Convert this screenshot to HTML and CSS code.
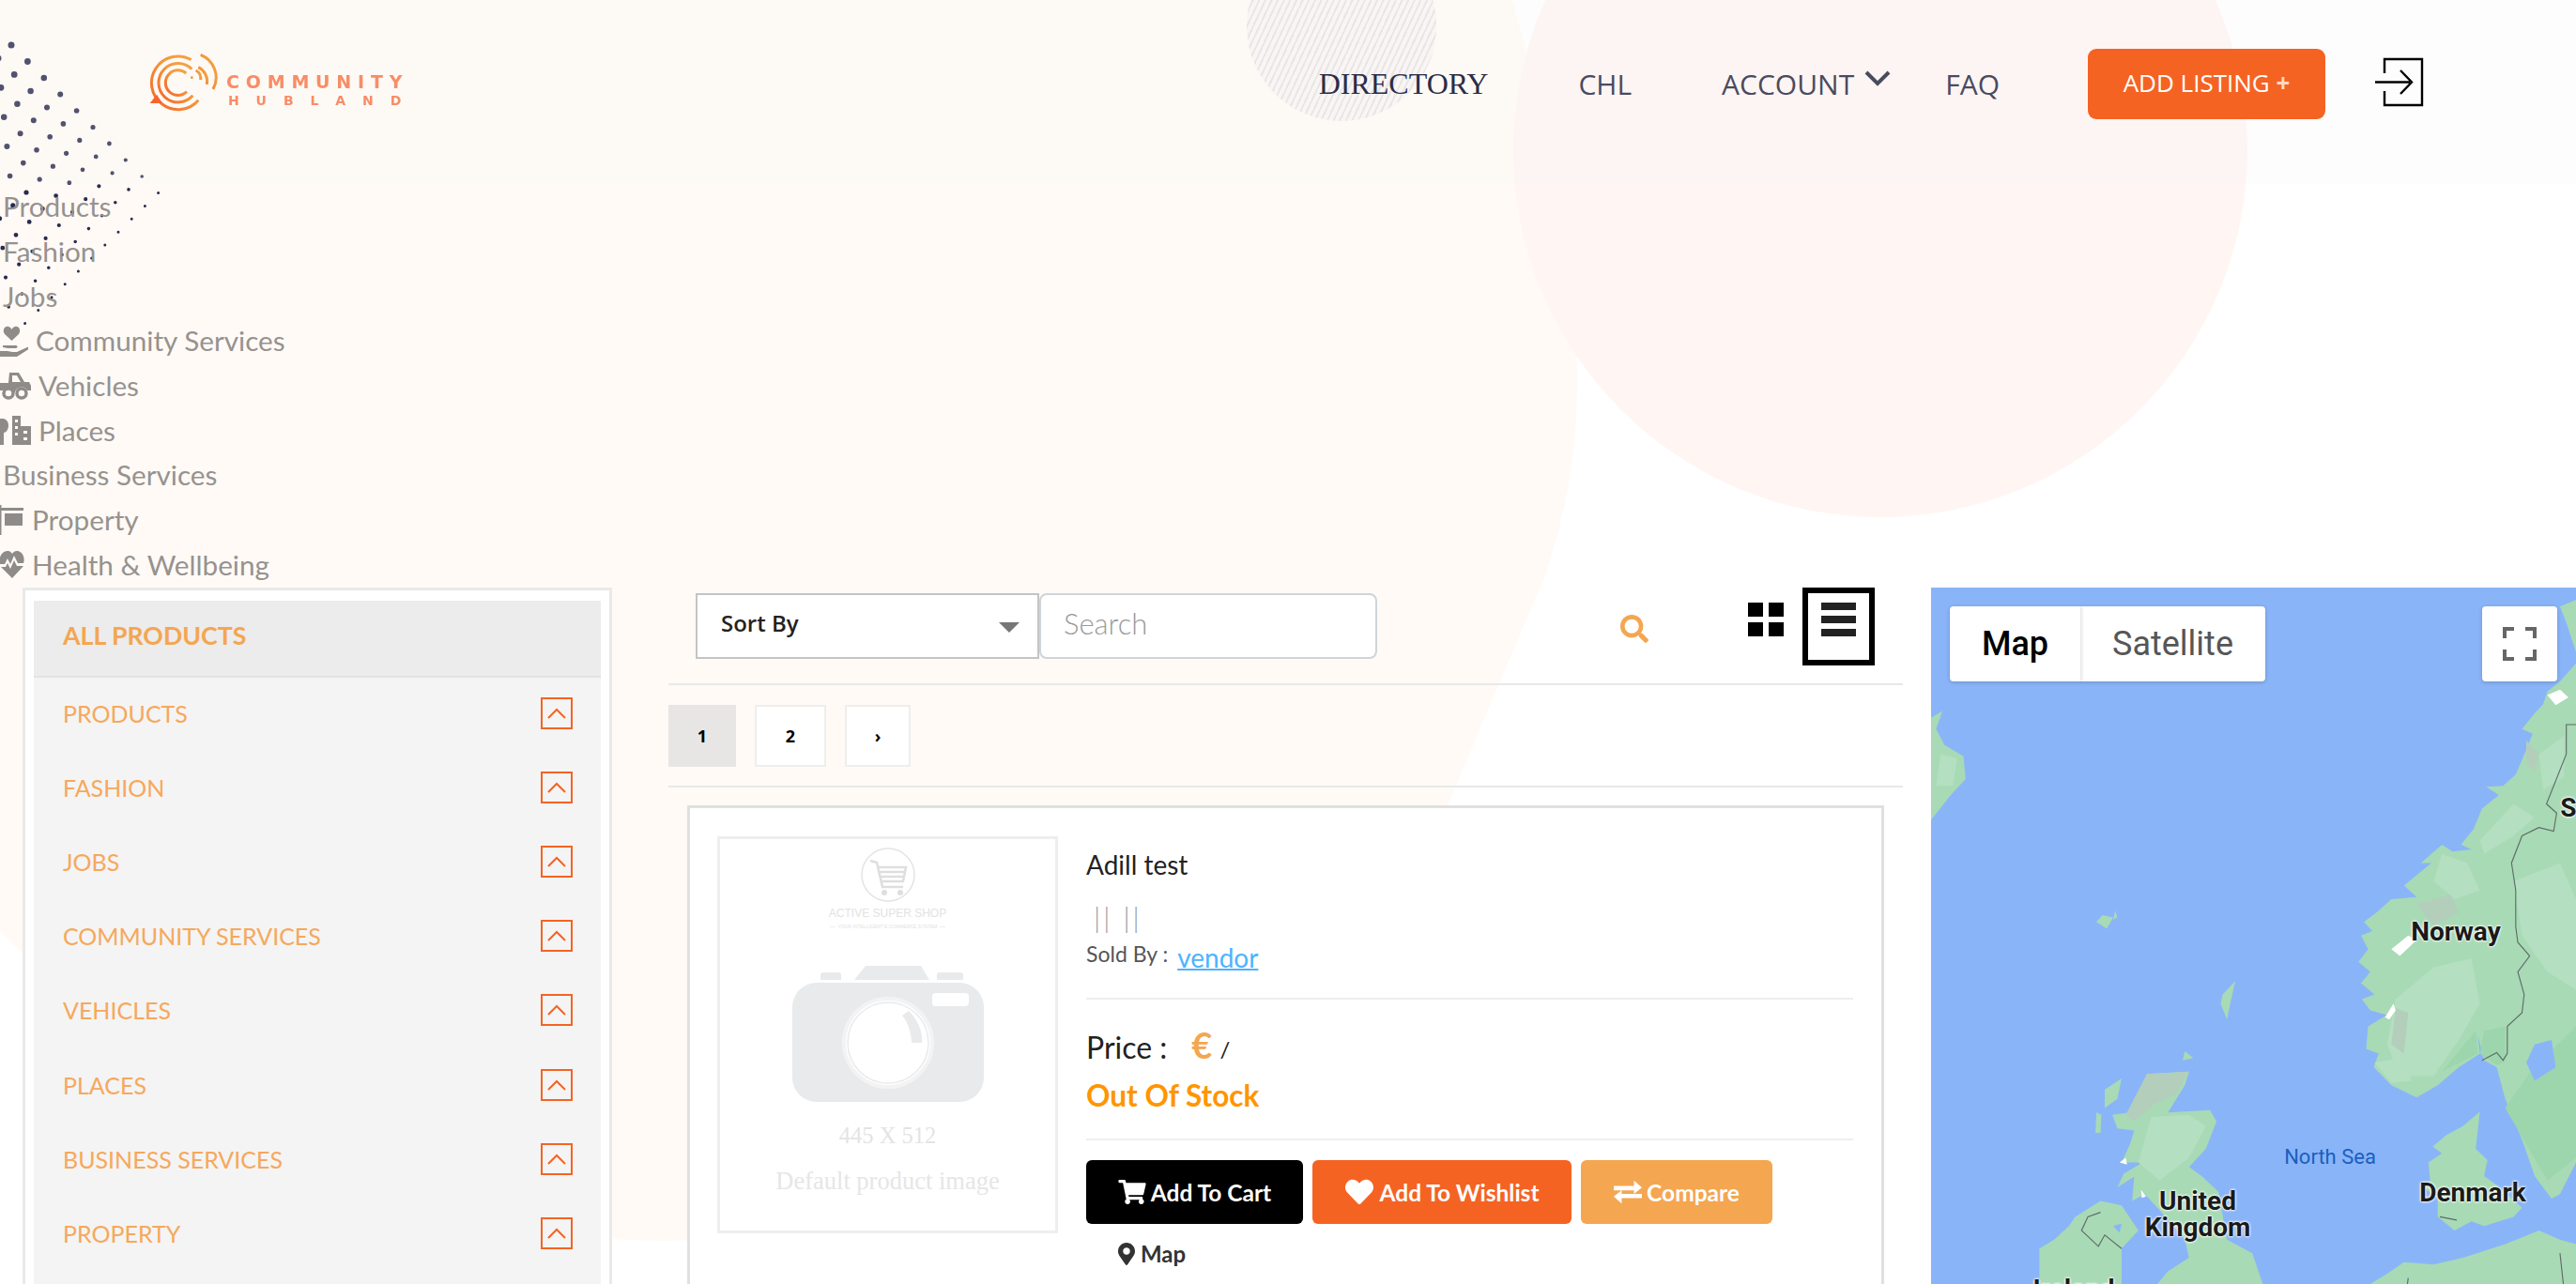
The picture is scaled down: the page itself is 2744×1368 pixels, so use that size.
FILE: index.html
```html
<!DOCTYPE html>
<html lang="en">
<head>
<meta charset="utf-8">
<title>Community Hubland - Directory</title>
<link rel="stylesheet" href="styles.css">
</head>
<body>
<div class="backdrop" aria-hidden="true">
  <svg class="blob" viewBox="0 0 2744 1368">
    <path class="blob-cream" d="M0 0H1611C1690 300 1700 450 1647 610L1542 858C1400 1200 1000 1322 700 1322C400 1320 150 1140 0 992Z"/>
    <circle class="blob-pink" cx="2003" cy="160" r="391"/>
  </svg>
  <div class="hatch"></div>
  <svg class="dots" viewBox="0 0 180 360">
    <g fill="none" stroke="#2a2a4e" stroke-linecap="round">
      <path stroke-width="7" d="M12 48h0M-2 62h0"/>
      <path stroke-width="6.8" d="M29.400 65.500h0M15.200 79.400h0M1 93.300h0"/>
      <path stroke-width="6.500" d="M46.800 83h0M32.600 96.900h0M18.400 110.800h0M4.200 124.700h0"/>
      <path stroke-width="6" d="M64.200 100.500h0M50 114.400h0M35.800 128.300h0M21.600 142.200h0M7.400 156.100h0"/>
      <path stroke-width="5.600" d="M81.600 118h0M67.400 131.900h0M53.200 145.800h0M39 159.700h0M24.800 173.600h0M10.600 187.500h0"/>
      <path stroke-width="5.200" d="M99 135.500h0M84.800 149.400h0M70.600 163.300h0M56.400 177.200h0M42.200 191.100h0M28 205h0M13.800 218.900h0M-.4 232.800h0"/>
      <path stroke-width="4.800" d="M116.400 153h0M102.200 166.900h0M88 180.800h0M73.800 194.700h0M59.600 208.600h0M45.400 222.500h0M31.200 236.400h0M17 250.300h0M2.800 264.200h0"/>
      <path stroke-width="4.200" d="M133.800 170.500h0M119.600 184.400h0M105.400 198.300h0M91.200 212.200h0M77 226.100h0M62.800 240h0M48.600 253.900h0M34.400 267.800h0M20.200 281.700h0M6 295.600h0"/>
      <path stroke-width="3.600" d="M151.200 188h0M137 201.900h0M122.800 215.800h0M108.600 229.700h0M94.400 243.600h0M80.200 257.500h0M66 271.400h0M51.800 285.300h0M37.600 299.200h0M23.400 313.100h0M9.200 327h0"/>
      <path stroke-width="3" d="M168.600 205.500h0M154.400 219.400h0M140.200 233.300h0M126 247.200h0M111.800 261.100h0M97.600 275h0M83.400 288.900h0M69.200 302.800h0M55 316.700h0M40.800 330.600h0M26.600 344.500h0"/>
    </g>
  </svg>
</div>

<header class="topbar">
  <a class="logo" href="#">
    <svg class="logo-mark" viewBox="80 75 225 195" aria-hidden="true">
      <defs>
        <linearGradient id="logoGrad" x1="0" y1="1" x2="1" y2="0">
          <stop offset="0" stop-color="#f5642a"/>
          <stop offset=".6" stop-color="#f49a3c"/>
          <stop offset="1" stop-color="#f2a545"/>
        </linearGradient>
      </defs>
      <g fill="none" stroke="url(#logoGrad)" stroke-width="9" stroke-linecap="butt">
        <path d="M220 101A85 85 0 1 0 243 230"/>
        <path d="M222 131A62 62 0 1 0 225 215"/>
        <path d="M204 144A40 40 0 1 0 206 203"/>
        <path d="M250 85A78 78 0 0 1 290 195"/>
        <path d="M243 125A50 50 0 0 1 270 180"/>
        <path d="M235 135A28 28 0 0 1 250 165"/>
      </g>
      <circle cx="222" cy="158" r="4" fill="#f4933a"/>
      <path d="M88 240L110 212L128 240Z" fill="#f5642a"/>
    </svg>
    <span class="logo-text">
      <span class="logo-top">COMMUNITY</span>
      <span class="logo-bottom">HUBLAND</span>
    </span>
  </a>
  <nav class="nav">
    <a class="nav-link nav-current" href="#">DIRECTORY</a>
    <a class="nav-link" href="#">CHL</a>
    <a class="nav-link nav-account" href="#">ACCOUNT
      <svg class="nav-chevron" viewBox="0 0 28 17" aria-hidden="true"><path d="M2 2L14 14L26 2" fill="none" stroke="#4a4a60" stroke-width="4"/></svg>
    </a>
    <a class="nav-link" href="#">FAQ</a>
    <a class="add-listing" href="#">ADD LISTING <b class="add-plus">+</b></a>
    <a class="logout" href="#" aria-label="Log out">
      <svg viewBox="0 0 52 53"><path d="M10 17V2H50V51H10V36" fill="none" stroke="#000" stroke-width="2.400"/><path d="M0 26.500H37M27 14L39 26.500L27 39" fill="none" stroke="#000" stroke-width="2.400"/></svg>
    </a>
  </nav>
</header>

<ul class="cat-list">
  <li class="cat-item">Products</li>
  <li class="cat-item">Fashion</li>
  <li class="cat-item">Jobs</li>
  <li class="cat-item">
    <svg class="cat-icon" viewBox="0 0 30 34" aria-hidden="true"><path d="M12.500 17L5 10C2 6 5 1 9 2C11 2.500 12 4 12.500 5C13 4 14 2.500 16 2C20 1 23 6 20 10Z"/><path d="M0 28H8L13 29H18L29 24C31 23 31 26 29 27L18 34H0ZM3 22H17C19 22 19 25 17 25H8L3 24Z"/></svg>
    <span>Community Services</span>
  </li>
  <li class="cat-item">
    <svg class="cat-icon cat-icon-wide" viewBox="0 0 33 30" aria-hidden="true"><path fill-rule="evenodd" d="M10 1H20L26 11H31L33 15V20H29A7 7 0 0 0 16 22H15A7 7 0 0 0 3 20H0V12H9ZM13 4V11H22L18 4Z"/><circle cx="9" cy="23" r="5" fill="none" stroke="#8f8b88" stroke-width="3.500"/><circle cx="23" cy="23" r="5" fill="none" stroke="#8f8b88" stroke-width="3.500"/></svg>
    <span>Vehicles</span>
  </li>
  <li class="cat-item">
    <svg class="cat-icon cat-icon-wide" viewBox="0 0 33 32" aria-hidden="true"><path d="M3 4C7 4 9 8 9 11C9 15 7 19 4 19V32H0V4Z"/><path fill-rule="evenodd" d="M13 1H22V12H33V32H13ZM16 5V8H19V5ZM16 12V15H19V12ZM16 19V22H19V19ZM25 17V20H29V17ZM25 24V27H29V24Z"/></svg>
    <span>Places</span>
  </li>
  <li class="cat-item">Business Services</li>
  <li class="cat-item">
    <svg class="cat-icon cat-icon-narrow" viewBox="0 0 26 32" aria-hidden="true"><path d="M0 0H1.500V32H0ZM1 3H25V6H1ZM5 9H24V22H5Z"/></svg>
    <span>Property</span>
  </li>
  <li class="cat-item">
    <svg class="cat-icon cat-icon-narrow" viewBox="0 0 26 30" aria-hidden="true"><path d="M13 30L1 18H6L8 14L11 20L15 11L18 17H25ZM0 15C-2 7 3 0 9 1C11 1.500 12.500 3 13 4C14 2 16 .5 19 1C24 2 27 8 25 14H19L15 6L11 15L8 9L5 15Z"/></svg>
    <span>Health &amp; Wellbeing</span>
  </li>
</ul>

<main class="layout">
  <aside class="sidebar">
    <div class="side-panel">
      <h2 class="side-title">ALL PRODUCTS</h2>
      <ul class="side-menu">
        <li class="side-row"><span>PRODUCTS</span><span class="side-toggle"><svg viewBox="0 0 20 12"><path d="M1 11L10 2L19 11"/></svg></span></li>
        <li class="side-row"><span>FASHION</span><span class="side-toggle"><svg viewBox="0 0 20 12"><path d="M1 11L10 2L19 11"/></svg></span></li>
        <li class="side-row"><span>JOBS</span><span class="side-toggle"><svg viewBox="0 0 20 12"><path d="M1 11L10 2L19 11"/></svg></span></li>
        <li class="side-row"><span>COMMUNITY SERVICES</span><span class="side-toggle"><svg viewBox="0 0 20 12"><path d="M1 11L10 2L19 11"/></svg></span></li>
        <li class="side-row"><span>VEHICLES</span><span class="side-toggle"><svg viewBox="0 0 20 12"><path d="M1 11L10 2L19 11"/></svg></span></li>
        <li class="side-row"><span>PLACES</span><span class="side-toggle"><svg viewBox="0 0 20 12"><path d="M1 11L10 2L19 11"/></svg></span></li>
        <li class="side-row"><span>BUSINESS SERVICES</span><span class="side-toggle"><svg viewBox="0 0 20 12"><path d="M1 11L10 2L19 11"/></svg></span></li>
        <li class="side-row"><span>PROPERTY</span><span class="side-toggle"><svg viewBox="0 0 20 12"><path d="M1 11L10 2L19 11"/></svg></span></li>
      </ul>
    </div>
  </aside>

  <section class="results">
    <div class="toolbar">
      <div class="sort-select"><span>Sort By</span><i class="caret"></i></div>
      <div class="search-input">Search</div>
      <svg class="search-icon" viewBox="0 0 512 512" aria-hidden="true"><path d="M505 442.700L405.300 343c-4.500-4.500-10.600-7-17-7H372c27.600-35.300 44-79.700 44-128C416 93.100 322.900 0 208 0S0 93.100 0 208s93.100 208 208 208c48.300 0 92.700-16.400 128-44v16.300c0 6.400 2.500 12.500 7 17l99.700 99.700c9.400 9.400 24.600 9.400 33.900 0l28.300-28.300c9.400-9.400 9.400-24.600.1-34zM208 336c-70.700 0-128-57.200-128-128 0-70.700 57.200-128 128-128 70.700 0 128 57.200 128 128 0 70.700-57.200 128-128 128z"/></svg>
      <div class="view-grid"><i></i><i></i><i></i><i></i></div>
      <div class="view-list"><i></i><i></i><i></i></div>
    </div>

    <div class="pager">
      <a class="page page-active" href="#">1</a>
      <a class="page" href="#">2</a>
      <a class="page page-next" href="#">›</a>
    </div>

    <article class="card">
      <div class="thumb">
        <svg class="thumb-cart" viewBox="0 0 60 60" aria-hidden="true">
          <circle cx="30" cy="30" r="28" fill="none" stroke="#e4e4e4" stroke-width="1.500"/>
          <path d="M11 15L18 17L24 43H46M20 22H49L46 37H23M21 27H47M22 32H47" fill="none" stroke="#dedede" stroke-width="2.500"/>
          <circle cx="26" cy="49" r="3" fill="#dedede"/><circle cx="43" cy="49" r="3" fill="#dedede"/>
        </svg>
        <div class="thumb-brand">ACTIVE SUPER SHOP</div>
        <div class="thumb-tag">YOUR INTELLIGENT E COMMERCE SYSTEM</div>
        <svg class="thumb-camera" viewBox="0 0 204 145" aria-hidden="true">
          <path d="M30 15V10Q30 7 33 7H49Q52 7 52 10V15ZM66 15L78 0H137L146 15ZM154 15V10Q154 7 157 7H179Q182 7 182 10V15Z" fill="#e9eaec"/>
          <rect x="0" y="18" width="204" height="127" rx="26" fill="#e9eaec"/>
          <rect x="149" y="29" width="39" height="14" rx="4" fill="#fff"/>
          <circle cx="102" cy="82" r="47" fill="#fff" stroke="#f3f3f4" stroke-width="4"/>
          <circle cx="102" cy="82" r="43" fill="none" stroke="#e9eaec" stroke-width="1.500"/>
          <path d="M117 53L124 48C134 58 139 70 138 82H127C127 72 123 60 117 53Z" fill="#e9eaec"/>
        </svg>
        <div class="thumb-size">445 X 512</div>
        <div class="thumb-label">Default product image</div>
      </div>

      <div class="info">
        <h3 class="info-title">Adill test</h3>
        <div class="info-rating">|| ||</div>
        <div class="info-seller"><span class="seller-label">Sold By :</span><a class="seller-link" href="#">vendor</a></div>
        <div class="info-price"><span class="price-label">Price :</span><span class="price-cur">€</span><span class="price-unit">/</span></div>
        <div class="info-stock">Out Of Stock</div>
        <div class="info-actions">
          <a class="btn btn-cart" href="#">
            <svg class="btn-ico" viewBox="0 0 576 512" aria-hidden="true"><path d="M528.120 301.319l47.273-208C578.806 78.301 567.391 64 551.990 64H159.208l-9.166-44.810C147.758 8.021 137.930 0 126.529 0H24C10.745 0 0 10.745 0 24v16c0 13.255 10.745 24 24 24h69.883l70.248 343.435C147.325 417.100 136 435.222 136 456c0 30.928 25.072 56 56 56s56-25.072 56-56c0-15.674-6.447-29.835-16.824-40h209.647C430.447 426.165 424 440.326 424 456c0 30.928 25.072 56 56 56s56-25.072 56-56c0-22.172-12.888-41.332-31.579-50.405l5.517-24.276c3.413-15.018-8.002-29.319-23.403-29.319H218.117l-6.545-32h293.145c11.206 0 20.920-7.754 23.403-18.681z"/></svg>
            <span>Add To Cart</span>
          </a>
          <a class="btn btn-wish" href="#">
            <svg class="btn-ico" viewBox="0 0 512 512" aria-hidden="true"><path d="M462.300 62.600C407.500 15.900 326 24.300 275.700 76.200L256 96.500l-19.700-20.300C186.100 24.300 104.500 15.900 49.700 62.600c-62.800 53.600-66.100 149.800-9.900 207.900l193.500 199.800c12.500 12.900 32.800 12.900 45.300 0l193.500-199.800c56.300-58.100 53-154.300-9.800-207.900z"/></svg>
            <span>Add To Wishlist</span>
          </a>
          <a class="btn btn-compare" href="#">
            <svg class="btn-ico" viewBox="0 0 32 26" aria-hidden="true"><path d="M0 6H23V0L32 8L23 15V11H0ZM32 15H9V11L0 18L9 26V20H32Z"/></svg>
            <span>Compare</span>
          </a>
        </div>
        <a class="map-link" href="#">
          <svg class="map-pin" viewBox="0 0 384 512" aria-hidden="true"><path d="M172.268 501.670C26.970 291.031 0 269.413 0 192 0 85.961 85.961 0 192 0s192 85.961 192 192c0 77.413-26.970 99.031-172.268 309.670-9.535 13.774-29.930 13.773-39.464 0zM192 272c44.183 0 80-35.817 80-80s-35.817-80-80-80-80 35.817-80 80 35.817 80 80 80z"/></svg>
          <span>Map</span>
        </a>
      </div>
    </article>
  </section>

  <section class="map">
    <svg class="map-land" viewBox="38 33 1530 1535" preserveAspectRatio="none" aria-hidden="true">
      <g fill="#a8dab5">
        <path d="M1568 60L1530 75L1545 110L1568 175ZM1568 200L1530 240L1500 262L1490 290L1470 310L1440 345L1465 355L1448 395L1425 445L1395 470L1355 472L1385 490L1345 520L1325 565L1295 600L1320 610L1275 615L1250 600L1200 640L1225 640L1160 690L1190 715L1130 720L1100 745L1065 770L1085 790L1058 800L1075 830L1052 858L1080 880L1058 905L1090 930L1060 940L1080 965L1120 975L1075 1000L1070 1050L1100 1060L1088 1090L1130 1130L1190 1157L1240 1130L1290 1090L1340 1060L1335 1020L1350 1075L1380 1090L1400 1160L1440 1250L1470 1330L1510 1380L1530 1370L1568 1300Z"/>
        <path d="M1340 1188L1300 1220L1260 1240L1228 1265L1250 1280L1218 1300L1222 1340L1200 1350L1240 1380L1240 1420L1280 1450L1320 1430L1350 1440L1420 1420L1440 1400L1380 1350L1350 1330L1358 1295L1330 1270Z"/>
        <path d="M1080 1568L1120 1545L1160 1520L1230 1525L1300 1510L1400 1480L1480 1450L1530 1470L1568 1480V1568Z"/>
        <path d="M550 1105L650 1100L640 1130L600 1190L700 1185L715 1210L690 1270L650 1310L680 1330L720 1365L740 1470L800 1500L825 1568H575L600 1540L650 1510L640 1470L575 1400L545 1370L515 1385L520 1330L540 1320L480 1355L495 1325L540 1300L490 1300L510 1260L520 1230L480 1225L468 1195L510 1190L530 1160Z"/>
        <path d="M490 1115L450 1140L450 1180L480 1160ZM430 1190L428 1235L440 1235L442 1195Z"/>
        <path d="M440 1385L380 1420L365 1440L330 1470L295 1490L295 1568H490V1490L530 1450L490 1395Z"/>
        <path d="M445 755L430 770L455 785L470 760ZM475 745L470 765L480 760ZM760 900L730 930L725 950L740 985L750 940ZM640 1055L635 1075L660 1070Z"/>
        <path d="M38 320L65 305L50 345L70 380L115 405L120 455L85 490L38 545Z"/>
      </g>
      <g fill="#b4dfc1">
        <path d="M1230 870L1320 850L1340 950L1290 1030L1230 1110L1150 1110L1120 1040L1140 940Z"/>
        <path d="M1250 620L1310 640L1340 700L1280 720L1230 680ZM1420 680L1530 640L1568 720V920L1500 880L1440 800Z"/>
        <path d="M1340 590L1420 510L1470 540L1420 580L1350 620ZM1480 400L1540 360V450L1490 480Z"/>
        <path d="M560 1200L650 1195L690 1220L650 1290L580 1340L530 1300Z"/>
        <path d="M60 400L100 410L90 470L50 470ZM1090 1080L1150 1070L1180 1120L1130 1125Z"/>
      </g>
      <g fill="#9dd6ac">
        <path d="M1400 1180L1460 1100L1568 1000V1290L1500 1340L1450 1260Z"/>
        <path d="M1340 1060L1350 1010L1400 1000L1400 1080L1380 1085ZM1250 1100L1330 1010L1335 1060Z"/>
      </g>
      <g fill="#b3cfbc">
        <path d="M550 1105L650 1100L620 1150L570 1170L520 1210L500 1195Z"/>
        <path d="M1190 730L1270 710L1290 750L1230 780ZM1140 960L1170 970L1160 1060L1130 1040ZM1450 370L1480 400L1470 440L1450 420Z"/>
      </g>
      <g fill="#fff">
        <path d="M1130 830L1170 800L1190 810L1150 845ZM1115 980L1135 950L1140 965L1125 985ZM1500 270L1530 258L1550 275L1520 292ZM485 1300L500 1290L503 1305ZM536 1360L548 1375L538 1378Z"/>
      </g>
      <g fill="#8ab4f8">
        <path d="M1470 1040L1510 1030L1520 1090L1470 1120L1450 1080ZM470 1440L490 1435L485 1455Z"/>
      </g>
      <g fill="none" stroke="#5f6a68" stroke-width="2.500">
        <path d="M1570 335L1545 335L1545 400L1498 510L1522 530L1515 570L1480 562L1440 580L1415 640L1425 700L1425 780L1430 815L1458 845L1430 880L1445 930L1440 970L1405 1000L1405 1060L1395 1075L1380 1058L1345 1075"/>
        <path d="M440 1410L410 1420L395 1450L435 1485L450 1460L490 1490M1245 1420L1285 1427M1530 1500L1538 1568M1170 1555L1168 1568"/>
      </g>
    </svg>
    <div class="map-tabs">
      <span class="map-tab map-tab-active">Map</span>
      <span class="map-tab">Satellite</span>
    </div>
    <div class="map-full">
      <svg viewBox="0 0 36 36" aria-hidden="true"><path d="M2 12V2H12M24 2H34V12M34 24V34H24M12 34H2V24" fill="none" stroke="#666" stroke-width="4"/></svg>
    </div>
    <span class="map-label label-norway">Norway</span>
    <span class="map-label label-uk">United<br>Kingdom</span>
    <span class="map-label label-denmark">Denmark</span>
    <span class="map-label label-ireland">Ireland</span>
    <span class="map-label label-sweden">Sweden</span>
    <span class="map-sea">North Sea</span>
  </section>
</main>
</body>
</html>
```
FILE: styles.css
```css
* { box-sizing: border-box; }
html, body { margin: 0; height: 1368px; overflow: hidden; background: #fff; }
body { position: relative; font-family: "Lato", sans-serif; color: #222; }
a { text-decoration: none; color: inherit; }
ul { list-style: none; margin: 0; padding: 0; }
h2, h3 { margin: 0; }

/* decorative backdrop */
.backdrop { position: absolute; inset: 0; z-index: 0; overflow: hidden; }
.blob { position: absolute; left: 0; top: 0; width: 2744px; height: 1368px; }
.blob-cream { fill: #fffaf6; }
.blob-pink { fill: #fff6f3; }
.hatch {
  position: absolute; left: 1328px; top: -73px; width: 202px; height: 202px; border-radius: 50%;
  background: repeating-linear-gradient(115deg, #e6e4e3 0 2px, #f9f6f4 2px 6px);
}
.dots { position: absolute; left: 0; top: 0; width: 180px; height: 360px; overflow: visible; }

/* header */
.topbar {
  position: relative; z-index: 1; height: 196px; padding: 0 162px 0 157px;
  display: flex; justify-content: space-between; align-items: flex-start;
  background: rgba(245, 245, 245, .2);
}
.logo { display: flex; align-items: flex-start; margin-top: 55px; }
.logo-mark { width: 75px; height: 65px; }
.logo-text { display: flex; flex-direction: column; margin: 23px 0 0 9px; filter: blur(.6px); color: #f88d66; font-family: "DejaVu Sans", sans-serif; font-weight: 700; }
.logo-top { font-size: 19px; line-height: 19px; letter-spacing: 6.800px; }
.logo-bottom { font-size: 14px; line-height: 14px; letter-spacing: 17.900px; margin: 3px 0 0 2px; }

.nav { display: flex; align-items: center; gap: 96px; height: 127px; padding-top: 52px; }
.nav-link { font-family: "Open Sans", sans-serif; font-size: 30px; color: #4a4a60; line-height: 75px; display: flex; align-items: center; }
.nav-current { font-family: "Liberation Serif", serif; font-size: 32px; color: #2c2c48; }
.nav-account { margin-right: -38px; }
.nav-chevron { width: 28px; height: 17px; margin: -12px 0 0 11px; }
.add-listing {
  width: 253px; height: 75px; margin-left: -2px; border-radius: 9px; background: #f56323; color: #fff;
  font-family: "Open Sans", sans-serif; font-size: 26px; line-height: 73px; text-align: center;
}
.add-plus { color: #ffd9c8; }
.logout { display: block; width: 52px; height: 53px; margin-left: -43px; margin-top: -4px; }
.logout svg { display: block; width: 52px; height: 53px; }

/* category list */
.cat-list { position: relative; z-index: 1; height: 430px; }
.cat-item { height: 47.700px; font-size: 29.700px; font-weight: 400; color: #96928f; padding-left: 3px; display: flex; align-items: center; }
.cat-item:has(.cat-icon) { padding-left: 0; }
.cat-icon { width: 30px; height: 34px; fill: #8f8b88; margin-right: 8px; }
.cat-icon-wide { width: 33px; height: 32px; }
.cat-icon-narrow { width: 26px; height: 32px; margin-right: 8px; }

/* three columns */
.layout { position: relative; z-index: 1; display: flex; align-items: flex-start; height: 742px; overflow: hidden; }

.sidebar { width: 628px; margin-left: 24px; height: 742px; background: #fff; border: 3px solid #e9e9e9; border-bottom: 0; padding: 11px 9px 0; flex: none; }
.side-panel { background: #f4f4f4; height: 100%; }
.side-title { height: 82px; background: #ececec; border-bottom: 2px solid #e3e3e3; padding: 0 31px; font-size: 26.700px; font-weight: 700; line-height: 75px; color: #f4a651; }
.side-menu { padding: 0 31px; margin-top: -2px; }
.side-row { height: 79.200px; display: flex; justify-content: space-between; align-items: center; font-size: 25px; font-weight: 400; color: #f6a85c; }
.side-toggle { width: 34px; height: 34px; margin-right: -1px; border: 2px solid #f56323; display: flex; align-items: center; justify-content: center; }
.side-toggle svg { width: 20px; height: 12px; fill: none; stroke: #f56323; stroke-width: 2; }

.results { width: 1315px; margin-left: 60px; flex: none; }
.toolbar { height: 104px; padding: 6px 0 0 29px; border-bottom: 2px solid #e8e8e8; display: flex; align-items: flex-start; }
.sort-select { width: 366px; height: 70px; background: #fff; border: 2px solid #c4c4c4; padding: 0 19px 0 25px; display: flex; align-items: center; justify-content: space-between; font-family: "Open Sans", sans-serif; font-size: 24px; font-weight: 600; color: #222; }
.sort-select span { margin-top: -8px; }
.caret { width: 0; height: 0; border: 11px solid transparent; border-top: 11px solid #777; border-bottom: 0; margin-top: 2px; }
.search-input { width: 360px; height: 70px; background: #fff; border: 2px solid #ced4da; border-radius: 8px; padding-left: 24px; font-size: 31px; line-height: 60px; color: #9a9a9a; font-weight: 300; }
.search-icon { width: 30px; height: 30px; fill: #f4a651; margin: 23px 0 0 259px; flex: none; }
.view-grid { width: 38px; height: 38px; margin: 10px 0 0 106px; display: grid; grid-template-columns: 16px 16px; grid-template-rows: 15px 15px; gap: 6px; flex: none; }
.view-grid i { background: #000; }
.view-list { width: 77px; height: 83px; margin: -6px 0 0 20px; border: 6px solid #000; padding: 10px 14px 0 14px; flex: none; display: flex; flex-direction: column; gap: 6px; }
.view-list i { height: 8px; background: #222; }

.pager { padding: 21px 0; border-bottom: 2px solid #e8e8e8; display: flex; gap: 20px; height: 109px; }
.page { width: 76px; height: 66px; border: 2px solid #eee; background: #fff; font-family: "Open Sans", sans-serif; font-size: 18px; font-weight: 700; color: #000; display: flex; align-items: center; justify-content: center; }
.page-active { width: 72px; background: #e8e6e4; border-color: #e8e6e4; }
.page-next { width: 70px; }

.card { margin: 19px 20px 0; background: #fff; border: 3px solid #e0e0e0; padding: 30px 30px 60px 29px; display: flex; gap: 30px; }
.thumb { width: 363px; height: 423px; border: 3px solid #eee; display: flex; flex-direction: column; align-items: center; flex: none; padding-top: 8px; background: #fff; }
.thumb-cart { width: 60px; height: 60px; }
.thumb-brand { font-family: "Liberation Sans", sans-serif; font-size: 12px; line-height: 16px; margin-top: 3px; color: #e2e2e2; }
.thumb-tag { font-family: "Liberation Sans", sans-serif; font-size: 5px; line-height: 8px; margin-top: 2px; color: #e2e2e2; display: flex; align-items: center; gap: 3px; width: 123px; white-space: nowrap; }
.thumb-tag::before, .thumb-tag::after { content: ""; flex: 1; height: 1px; background: #eee; }
.thumb-camera { width: 204px; height: 145px; margin-top: 38px; }
.thumb-size { font-family: "Liberation Serif", serif; font-size: 24.500px; line-height: 30px; margin-top: 21px; color: #e4e4e4; }
.thumb-label { font-family: "Liberation Serif", serif; font-size: 26.500px; line-height: 30px; margin-top: 18px; color: #e6e6e6; }

.info { flex: 1; min-width: 0; }
.info-title { font-size: 28px; font-weight: 400; line-height: 34px; margin-top: 13px; color: #222; }
.info-rating { font-size: 30px; line-height: 36px; font-weight: 300; color: #999; margin: 21px 0 0 8px; letter-spacing: 3px; }
.info-seller { display: flex; align-items: flex-start; height: 70px; padding-top: 6px; border-bottom: 2px solid #eee; }
.seller-label { font-size: 23px; line-height: 30px; color: #555; }
.seller-link { font-size: 28px; line-height: 33px; color: #4db3ff; text-decoration: underline; text-decoration-thickness: 2px; margin: 3px 0 0 10px; }
.info-price { display: flex; align-items: flex-end; height: 71px; font-size: 32px; color: #222; }
.price-label { line-height: 40px; }
.price-cur { font-size: 38px; line-height: 46px; font-weight: 700; color: #f4a651; margin-left: 26px; }
.price-unit { font-size: 24px; line-height: 36px; margin-left: 8px; }
.info-stock { font-size: 31.500px; font-weight: 700; line-height: 40px; color: #ff9500; margin-top: 11px; height: 68px; border-bottom: 2px solid #eee; }
.info-actions { display: flex; gap: 10px; margin-top: 21px; }
.btn { height: 68px; border-radius: 6px; color: #fff; font-size: 24.500px; font-weight: 700; display: flex; align-items: center; justify-content: center; gap: 5px; white-space: nowrap; }
.btn-ico { fill: #fff; height: 26px; width: 30px; }
.btn-cart { width: 231px; background: #000; }
.btn-wish { width: 276px; background: #f56323; }
.btn-wish .btn-ico { height: 30px; width: 32px; }
.btn-compare { width: 204px; background: #f4a651; }
.map-link { display: flex; align-items: center; gap: 6px; margin: 14px 0 0 34px; font-size: 24px; font-weight: 700; color: #333; line-height: 36px; }
.map-pin { width: 18px; height: 24px; fill: #333; }

.map { position: relative; flex: none; width: 687px; height: 742px; margin-left: 30px; background: #8ab4f8; overflow: hidden; font-family: "Roboto", sans-serif; }
.map-land { position: absolute; left: 0; top: 0; width: 100%; height: 100%; }
.map-tabs { position: absolute; left: 20px; top: 20px; display: flex; height: 80px; background: #fff; border-radius: 4px; box-shadow: 0 1px 4px rgba(0, 0, 0, .2); overflow: hidden; font-size: 36px; }
.map-tab { width: 197px; line-height: 80px; text-align: center; color: #565656; }
.map-tab-active { width: 139px; color: #000; font-weight: 500; box-shadow: 1px 0 4px rgba(0, 0, 0, .15); position: relative; }
.map-full { position: absolute; left: 587px; top: 20px; width: 80px; height: 80px; background: #fff; border-radius: 4px; box-shadow: 0 1px 4px rgba(0, 0, 0, .2); display: flex; align-items: center; justify-content: center; }
.map-full svg { width: 36px; height: 36px; }
.map-label { position: absolute; transform: translate(-50%, -50%); font-size: 28px; font-weight: 700; line-height: 28px; text-align: center; color: #1a1a1a; white-space: nowrap; text-shadow: 0 0 3px #fff, 0 0 3px #fff, 0 0 2px #fff; }
.label-norway { left: 559px; top: 367px; }
.label-uk { left: 284px; top: 668px; }
.label-denmark { left: 577px; top: 645px; }
.label-ireland { left: 152px; top: 748px; }
.label-sweden { left: 720px; top: 235px; }
.map-sea { position: absolute; left: 425px; top: 606px; transform: translate(-50%, -50%); font-size: 22px; color: #1a5fbf; white-space: nowrap; }
```
